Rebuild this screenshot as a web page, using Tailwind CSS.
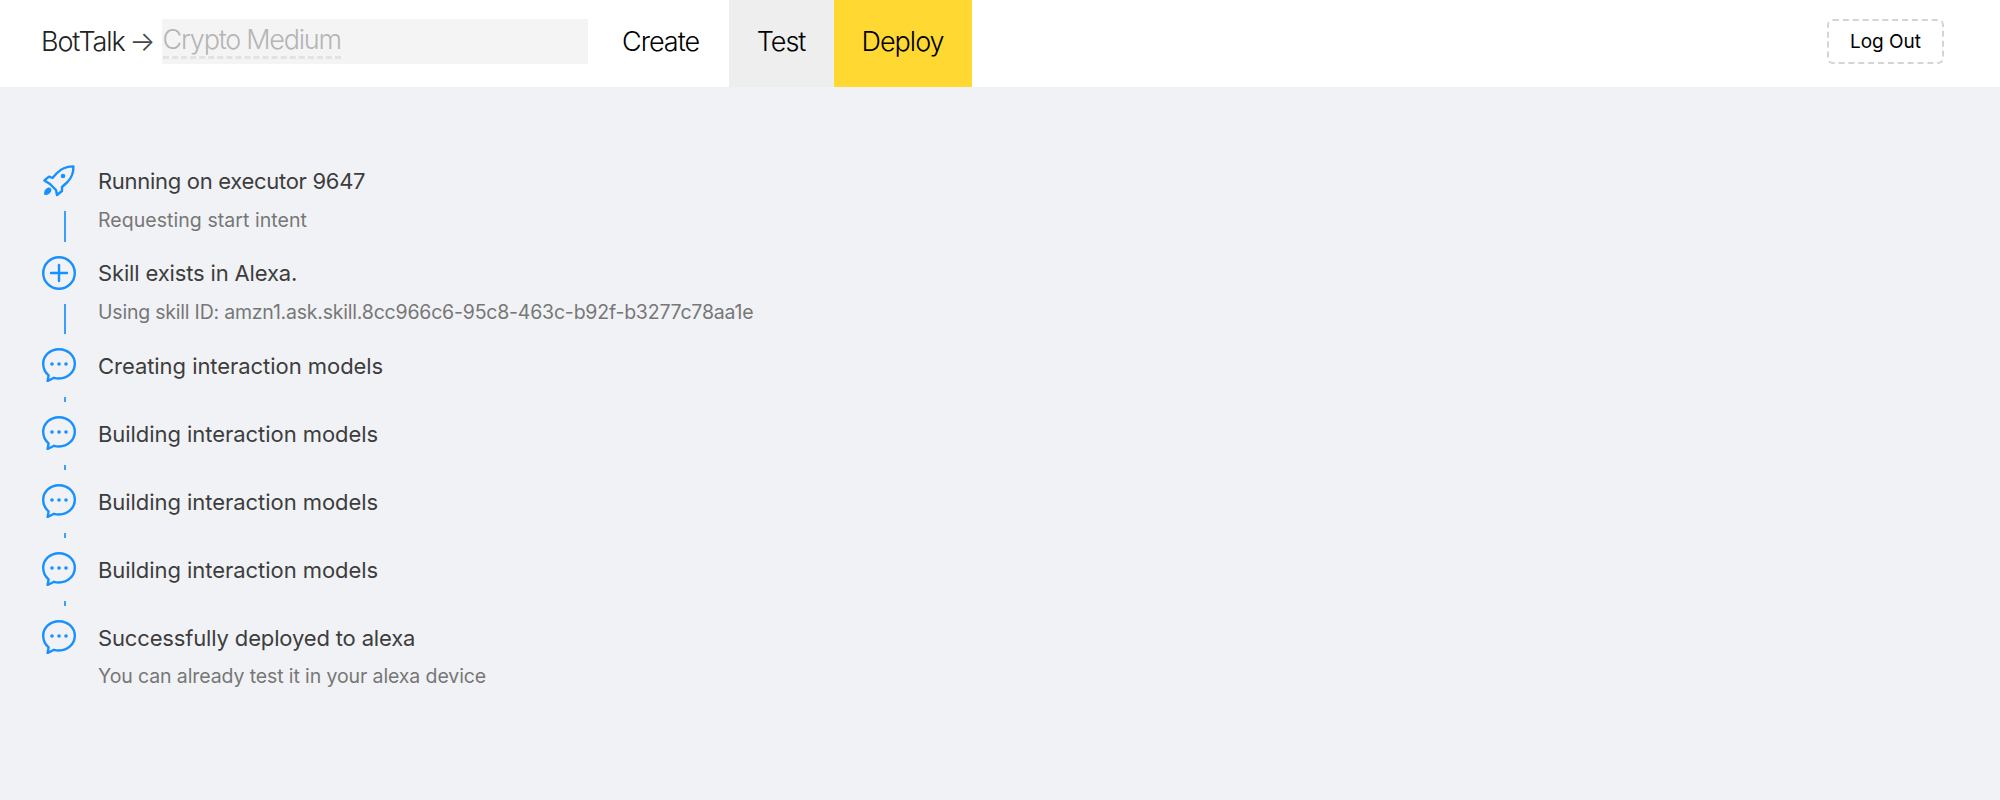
<!DOCTYPE html>
<html>
<head>
<meta charset="utf-8">
<script src="https://cdn.jsdelivr.net/npm/@tailwindcss/browser@4"></script>
</head>
<body class="bg-white font-['Inter',sans-serif]">
<div class="flex flex-col h-[800px]">
  <header class="h-[87px] bg-white flex items-center relative shrink-0">
    <div class="flex h-full items-center pl-[41px]">
      <span class="text-[27px] font-light tracking-[-1.1px] text-[#222] mb-[3px]">BotTalk</span>
      <span class="text-[27px] font-light text-[#444] ml-[5px] w-[32px] mb-[3px]">→</span>
      <div class="w-[426px] h-[45px] bg-[#f4f4f4] flex items-center pl-[1px] mb-[4px]">
        <span class="text-[27px] font-light tracking-[-1.25px] text-[#b5b5b5] border-b-[3px] border-dashed border-[#e2e2e2] leading-[32px]">Crypto Medium</span>
      </div>
    </div>
    <nav class="flex h-full">
      <a class="h-full w-[141px] flex items-center justify-center text-[27px] font-light tracking-[-1px] text-black pl-[5px] pb-[3px]">Create</a>
      <a class="h-full w-[105px] flex items-center justify-center text-[27px] font-light tracking-[-1px] text-black bg-[#eeeeee] pb-[3px]">Test</a>
      <a class="h-full w-[138px] flex items-center justify-center text-[27px] font-light tracking-[-1px] text-black bg-[#ffd832] pb-[3px]">Deploy</a>
    </nav>
    <div class="ml-auto pr-[56px] mb-[4px]">
      <button class="w-[117px] h-[45px] border-2 border-dashed border-[#d4d4d4] rounded-[6px] text-[19px] text-black flex items-center justify-center pt-[1px]">Log Out</button>
    </div>
  </header>
  <main class="flex-1 bg-[#f0f2f5] pt-[77px] pl-[42px]">
    <div class="flex">
      <div class="w-[56px] shrink-0 flex flex-col">
        <div class="h-[34px] flex items-center">
          <svg class="w-[34px] h-[34px]" viewBox="0 0 34 34" fill="none" stroke="#1890ff" stroke-width="2.4" stroke-linejoin="round">
            <path d="M31.4 2.4C25 2.2 19 4.6 14.5 9.5L10.5 14 7 12.6 2.4 16.4 8 20 14 26 15 31 20 27 20 23 25.5 18C29.6 13.8 31.6 9 31.4 2.4Z"/>
            <circle cx="21" cy="12" r="2.3" fill="#1890ff" stroke="none"/>
            <path d="M2.4 31C1.6 28 3 24.6 6.4 23.6 9 23.4 10 25.4 9 27.4 7.8 30 5.4 31 2.4 31Z" fill="#1890ff" stroke="none"/>
          </svg>
        </div>
        <div class="mt-[13px] h-[31px] mb-[14px] ml-[22px] w-[2px] bg-[#1890ff]/85"></div>
      </div>
      <div>
        <div class="h-[34px] leading-[34px] text-[22px] tracking-[-0.3px] text-[#3d3d3d]">Running on executor 9647</div>
        <div class="mt-[10px] leading-[24px] text-[19.5px] tracking-[0.05px] text-[#777]">Requesting start intent</div>
      </div>
    </div>
    <div class="flex">
      <div class="w-[56px] shrink-0 flex flex-col">
        <svg class="w-[34px] h-[34px]" viewBox="0 0 34 34" fill="none" stroke="#1890ff" stroke-width="2.4" stroke-linecap="round">
          <circle cx="17" cy="17" r="15.8"/>
          <path d="M9 17H25M17 9V25"/>
        </svg>
        <div class="mt-[14px] h-[30px] mb-[14px] ml-[22px] w-[2px] bg-[#1890ff]/85"></div>
      </div>
      <div>
        <div class="h-[34px] leading-[34px] text-[22px] tracking-[-0.15px] text-[#3d3d3d]">Skill exists in Alexa.</div>
        <div class="mt-[10px] leading-[24px] text-[19.5px] tracking-[-0.21px] text-[#777]">Using skill ID: amzn1.ask.skill.8cc966c6-95c8-463c-b92f-b3277c78aa1e</div>
      </div>
    </div>
    <div class="flex">
      <div class="w-[56px] shrink-0 flex flex-col">
        <svg class="w-[34px] h-[34px]" viewBox="0 0 34 34" fill="none">
          <path d="M17 1.2C8.2 1.2 1.2 7.6 1.2 15.8C1.2 20.6 3.4 24.6 6.6 27.4L5.6 33L12 29.8C13.6 30.3 15.3 30.5 17 30.5C25.8 30.5 32.8 24 32.8 15.8C32.8 7.6 25.8 1.2 17 1.2Z" stroke="#1890ff" stroke-width="2.4" stroke-linejoin="round"/>
          <circle cx="10" cy="16" r="1.8" fill="#1890ff"/><circle cx="17" cy="16" r="1.8" fill="#1890ff"/><circle cx="24" cy="16" r="1.8" fill="#1890ff"/>
        </svg>
        <div class="mt-[15px] h-[5px] mb-[14px] ml-[22px] w-[2px] bg-[#1890ff]/85"></div>
      </div>
      <div class="h-[34px] leading-[36px] text-[22px] tracking-[-0.05px] text-[#3d3d3d]">Creating interaction models</div>
    </div>
    <div class="flex">
      <div class="w-[56px] shrink-0 flex flex-col">
        <svg class="w-[34px] h-[34px]" viewBox="0 0 34 34" fill="none">
          <path d="M17 1.2C8.2 1.2 1.2 7.6 1.2 15.8C1.2 20.6 3.4 24.6 6.6 27.4L5.6 33L12 29.8C13.6 30.3 15.3 30.5 17 30.5C25.8 30.5 32.8 24 32.8 15.8C32.8 7.6 25.8 1.2 17 1.2Z" stroke="#1890ff" stroke-width="2.4" stroke-linejoin="round"/>
          <circle cx="10" cy="16" r="1.8" fill="#1890ff"/><circle cx="17" cy="16" r="1.8" fill="#1890ff"/><circle cx="24" cy="16" r="1.8" fill="#1890ff"/>
        </svg>
        <div class="mt-[15px] h-[5px] mb-[14px] ml-[22px] w-[2px] bg-[#1890ff]/85"></div>
      </div>
      <div class="h-[34px] leading-[36px] text-[22px] tracking-[-0.05px] text-[#3d3d3d]">Building interaction models</div>
    </div>
    <div class="flex">
      <div class="w-[56px] shrink-0 flex flex-col">
        <svg class="w-[34px] h-[34px]" viewBox="0 0 34 34" fill="none">
          <path d="M17 1.2C8.2 1.2 1.2 7.6 1.2 15.8C1.2 20.6 3.4 24.6 6.6 27.4L5.6 33L12 29.8C13.6 30.3 15.3 30.5 17 30.5C25.8 30.5 32.8 24 32.8 15.8C32.8 7.6 25.8 1.2 17 1.2Z" stroke="#1890ff" stroke-width="2.4" stroke-linejoin="round"/>
          <circle cx="10" cy="16" r="1.8" fill="#1890ff"/><circle cx="17" cy="16" r="1.8" fill="#1890ff"/><circle cx="24" cy="16" r="1.8" fill="#1890ff"/>
        </svg>
        <div class="mt-[15px] h-[5px] mb-[14px] ml-[22px] w-[2px] bg-[#1890ff]/85"></div>
      </div>
      <div class="h-[34px] leading-[36px] text-[22px] tracking-[-0.05px] text-[#3d3d3d]">Building interaction models</div>
    </div>
    <div class="flex">
      <div class="w-[56px] shrink-0 flex flex-col">
        <svg class="w-[34px] h-[34px]" viewBox="0 0 34 34" fill="none">
          <path d="M17 1.2C8.2 1.2 1.2 7.6 1.2 15.8C1.2 20.6 3.4 24.6 6.6 27.4L5.6 33L12 29.8C13.6 30.3 15.3 30.5 17 30.5C25.8 30.5 32.8 24 32.8 15.8C32.8 7.6 25.8 1.2 17 1.2Z" stroke="#1890ff" stroke-width="2.4" stroke-linejoin="round"/>
          <circle cx="10" cy="16" r="1.8" fill="#1890ff"/><circle cx="17" cy="16" r="1.8" fill="#1890ff"/><circle cx="24" cy="16" r="1.8" fill="#1890ff"/>
        </svg>
        <div class="mt-[15px] h-[5px] mb-[14px] ml-[22px] w-[2px] bg-[#1890ff]/85"></div>
      </div>
      <div class="h-[34px] leading-[36px] text-[22px] tracking-[-0.05px] text-[#3d3d3d]">Building interaction models</div>
    </div>
    <div class="flex">
      <div class="w-[56px] shrink-0 flex flex-col">
        <svg class="w-[34px] h-[34px]" viewBox="0 0 34 34" fill="none">
          <path d="M17 1.2C8.2 1.2 1.2 7.6 1.2 15.8C1.2 20.6 3.4 24.6 6.6 27.4L5.6 33L12 29.8C13.6 30.3 15.3 30.5 17 30.5C25.8 30.5 32.8 24 32.8 15.8C32.8 7.6 25.8 1.2 17 1.2Z" stroke="#1890ff" stroke-width="2.4" stroke-linejoin="round"/>
          <circle cx="10" cy="16" r="1.8" fill="#1890ff"/><circle cx="17" cy="16" r="1.8" fill="#1890ff"/><circle cx="24" cy="16" r="1.8" fill="#1890ff"/>
        </svg>
      </div>
      <div>
        <div class="h-[34px] leading-[36px] text-[22px] tracking-[-0.15px] text-[#3d3d3d]">Successfully deployed to alexa</div>
        <div class="mt-[10px] leading-[24px] text-[19.5px] tracking-[-0.11px] text-[#777]">You can already test it in your alexa device</div>
      </div>
    </div>
  </main>
</div>
</body>
</html>
